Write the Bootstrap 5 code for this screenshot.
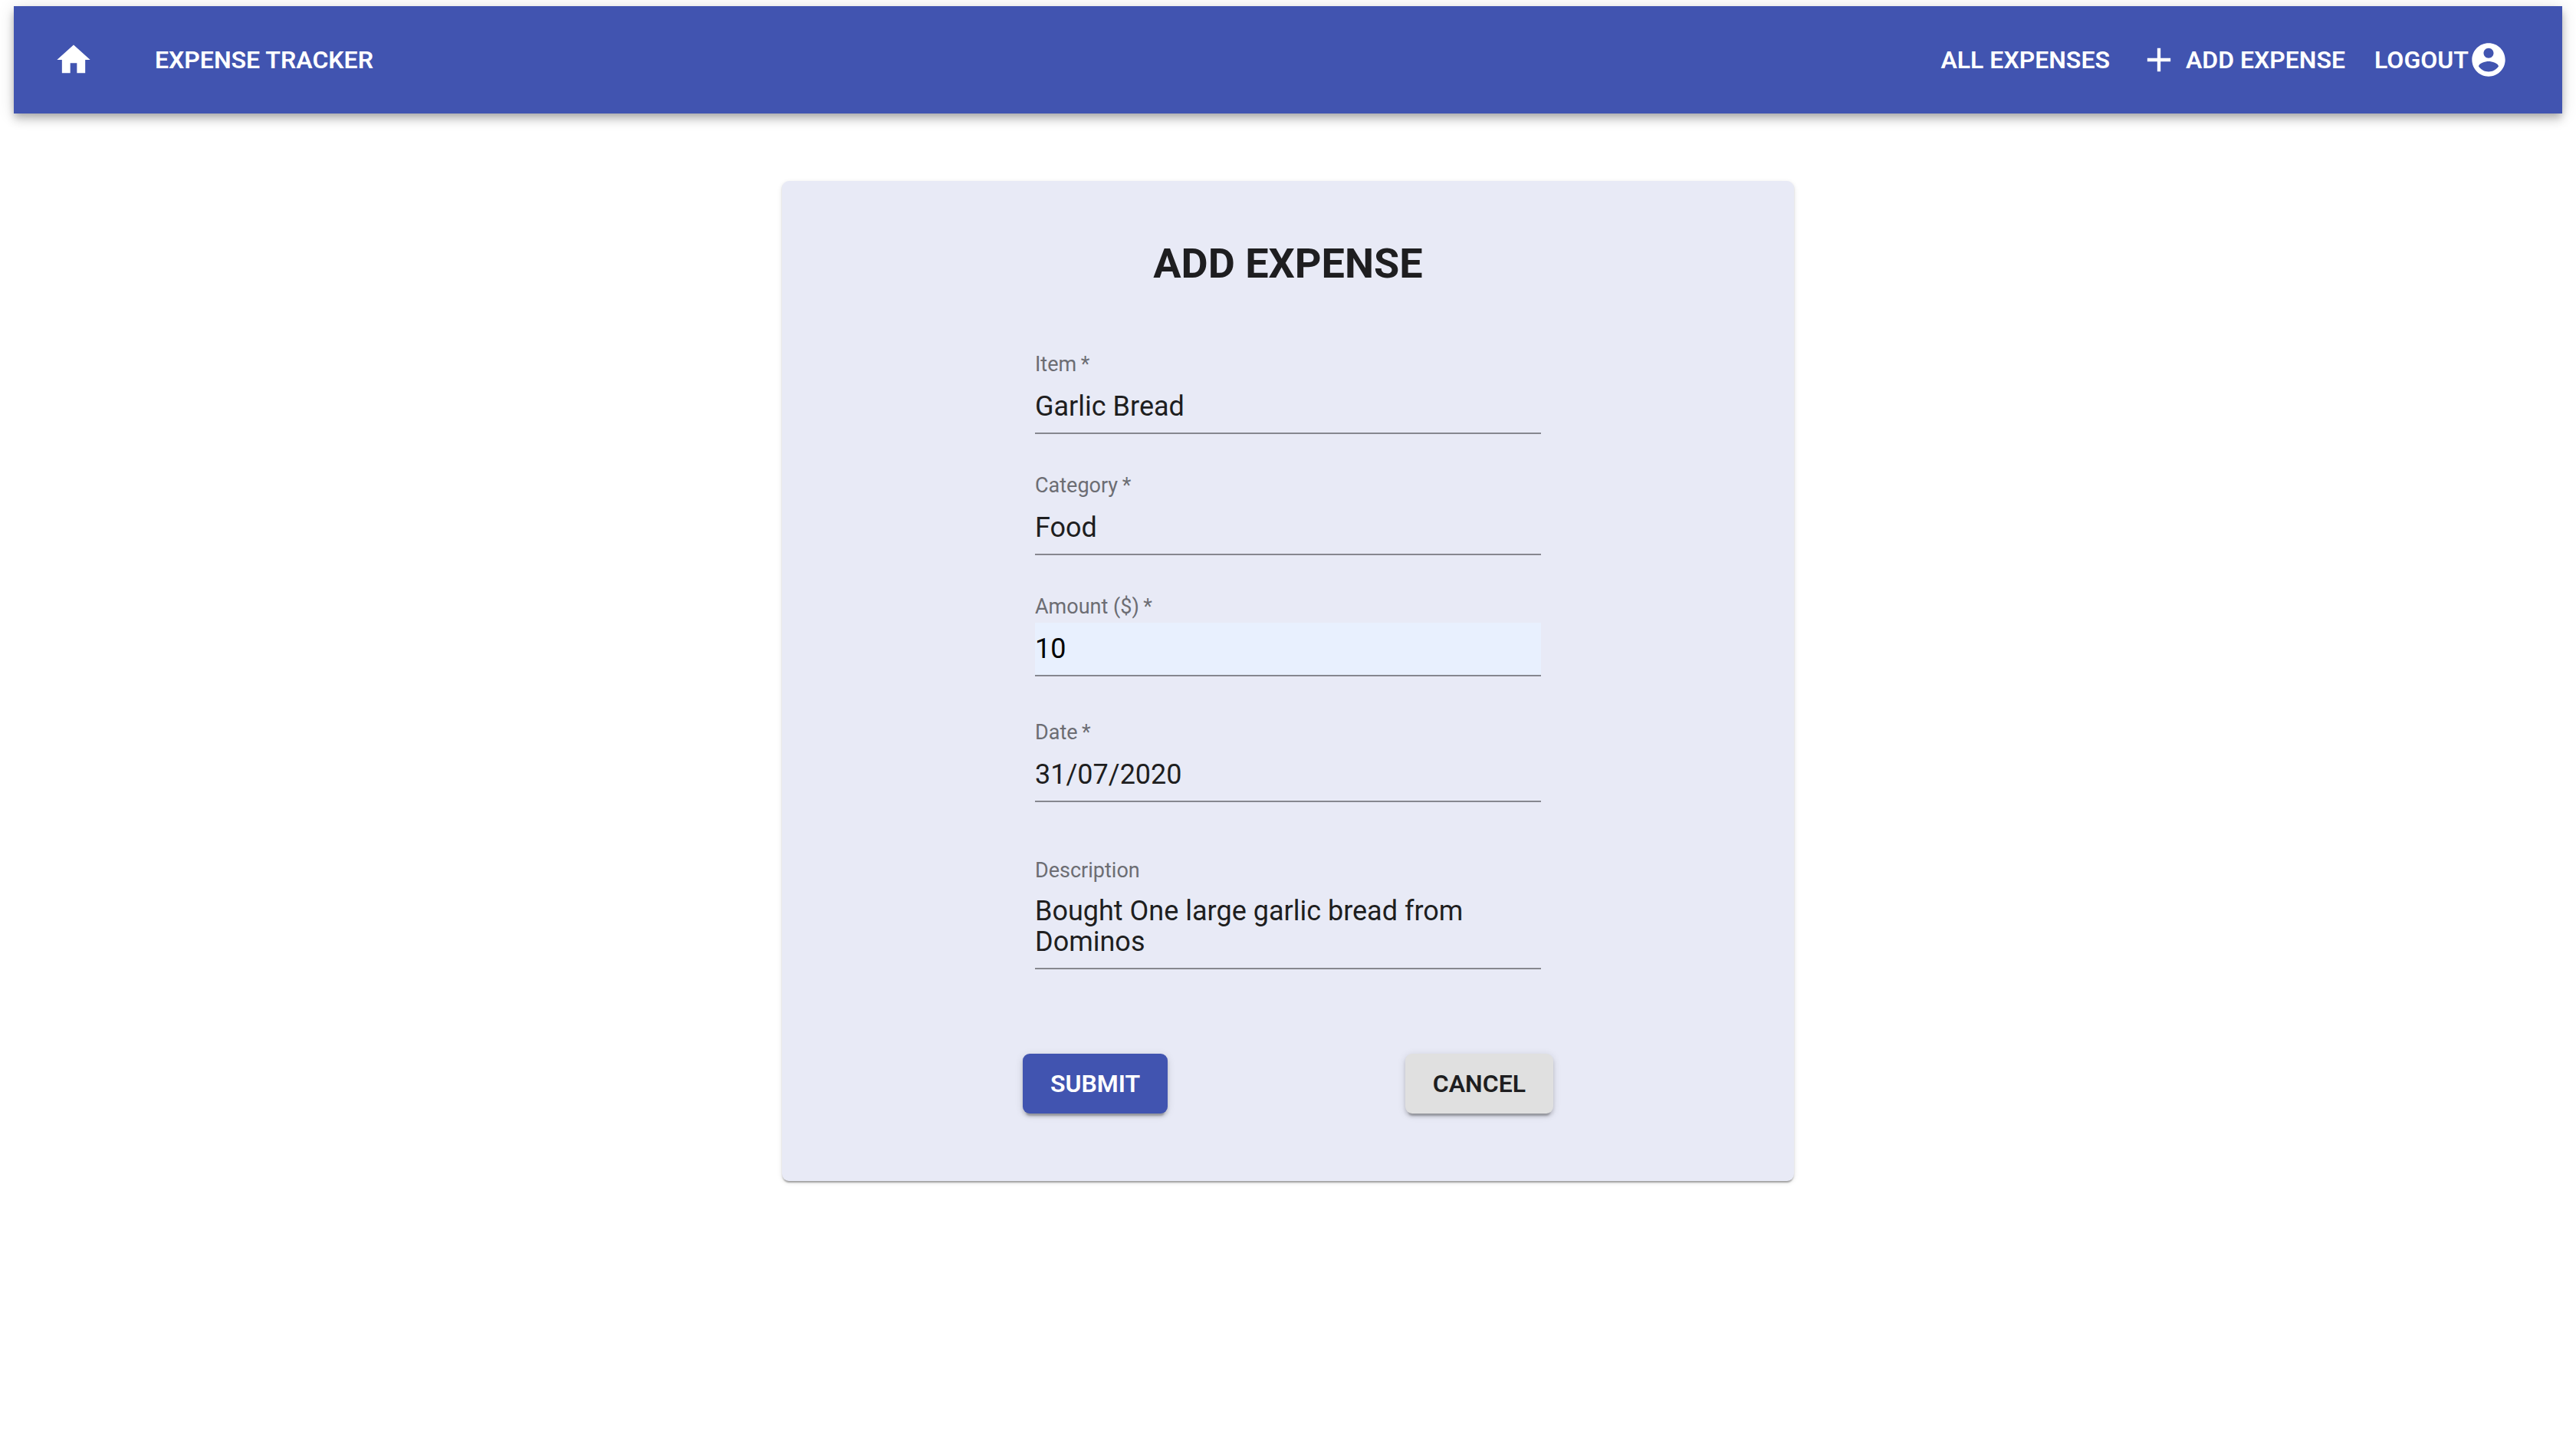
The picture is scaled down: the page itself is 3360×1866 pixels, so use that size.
<!DOCTYPE html>
<html lang="en">
<head>
<meta charset="utf-8">
<meta name="viewport" content="width=device-width, initial-scale=1">
<title>Expense Tracker</title>
<link href="https://cdn.jsdelivr.net/npm/bootstrap@5.3.0/dist/css/bootstrap.min.css" rel="stylesheet">
<style>
  :root { --indigo: #4154b0; --ink: #1e1e20; }
  body { font-family: Roboto, "Liberation Sans", sans-serif; font-size: 36px; color: var(--ink); background: #fff; padding: 8px 18px; }
  svg { width: 52px; height: 52px; fill: currentColor; flex: none; }
  .topbar { min-height: 140px; padding: 0 70px 0 52px; background: var(--indigo);
    box-shadow: 0 4px 9px -2px rgba(0,0,0,.2), 0 9px 11px 0 rgba(0,0,0,.14), 0 2px 22px 0 rgba(0,0,0,.12); }
  .topbar a { font-size: 32px; line-height: 56px; font-weight: 600; color: #fff; text-decoration: none; }
  .brand-gap { gap: 80px; }
  .menu-gap { gap: 38px; }
  .add-gap { gap: 9px; }
  .panel { max-width: 1320px; margin-top: 88px; padding: 76px 0 88px; border-radius: 9px; background: #e8eaf6;
    box-shadow: 0 4px 2px -2px rgba(0,0,0,.2), 0 2px 2px 0 rgba(0,0,0,.14), 0 2px 6px 0 rgba(0,0,0,.12); }
  .panel h1 { font-size: 54px; line-height: 64px; font-weight: 700; margin-bottom: 83px; }
  .fields { gap: 51px; }
  .fields .form-label { display: block; font-size: 27px; line-height: 32px; margin-bottom: 5px; color: #6c6d73; }
  .fields .form-control { font-size: 36px; line-height: 40px; padding: 14px 0; color: var(--ink); background: transparent;
    border: 0; border-bottom: 2px solid #86878f; border-radius: 0; resize: none; overflow: hidden; }
  .fields textarea.form-control { padding-top: 12px; }
  .fields .autofilled { background: #e8f0fe; color: #000; }
  .field-date { margin: 6px 0 22px; }
  .actions { margin: 110px -16px 0; }
  .action-btn { font-size: 32px; line-height: 38px; font-weight: 600; padding: 20px 36px; border: 0; border-radius: 9px;
    box-shadow: 0 7px 2px -4px rgba(0,0,0,.2), 0 4px 4px 0 rgba(0,0,0,.14), 0 2px 11px 0 rgba(0,0,0,.12); }
  .btn-submit, .btn-submit:hover { background: var(--indigo); color: #fff; }
  .btn-cancel, .btn-cancel:hover { background: #e0e0e0; color: var(--ink); }
</style>
</head>
<body>
<nav class="topbar d-flex align-items-center justify-content-between">
  <div class="brand-gap d-flex align-items-center">
    <a href="#" class="d-flex" aria-label="Home"><svg viewBox="0 0 24 24" aria-hidden="true"><path d="M10 20v-6h4v6h5v-8h3L12 3 2 12h3v8z"/></svg></a>
    <a href="#">EXPENSE TRACKER</a>
  </div>
  <div class="menu-gap d-flex align-items-center">
    <a href="#">ALL EXPENSES</a>
    <a href="#" class="add-gap d-flex align-items-center"><svg viewBox="0 0 24 24" aria-hidden="true"><path d="M19 13h-6v6h-2v-6H5v-2h6V5h2v6h6v2z"/></svg>ADD EXPENSE</a>
    <a href="#" class="d-flex align-items-center">LOGOUT<svg viewBox="0 0 24 24" aria-hidden="true"><path d="M12 2C6.480 2 2 6.480 2 12s4.480 10 10 10 10-4.480 10-10S17.520 2 12 2zm0 3c1.660 0 3 1.340 3 3s-1.340 3-3 3-3-1.340-3-3 1.340-3 3-3zm0 14.200c-2.500 0-4.710-1.280-6-3.220.030-1.990 4-3.080 6-3.080 1.990 0 5.970 1.090 6 3.080-1.290 1.940-3.500 3.220-6 3.220z"/></svg></a>
  </div>
</nav>
<main class="panel mx-auto">
  <h1 class="text-center">ADD EXPENSE</h1>
  <form class="w-50 mx-auto">
    <div class="fields d-flex flex-column">
      <div>
        <label class="form-label" for="item">Item&thinsp;*</label>
        <input class="form-control" id="item" type="text" value="Garlic Bread" required>
      </div>
      <div>
        <label class="form-label" for="category">Category&thinsp;*</label>
        <input class="form-control" id="category" type="text" value="Food" required>
      </div>
      <div>
        <label class="form-label" for="amount">Amount ($)&thinsp;*</label>
        <input class="form-control autofilled" id="amount" type="text" inputmode="decimal" value="10" required>
      </div>
      <div class="field-date">
        <label class="form-label" for="date">Date&thinsp;*</label>
        <input class="form-control" id="date" type="text" value="31/07/2020" required>
      </div>
      <div>
        <label class="form-label" for="description">Description</label>
        <textarea class="form-control" id="description" rows="2">Bought One large garlic bread from Dominos</textarea>
      </div>
    </div>
    <div class="actions d-flex justify-content-between">
      <button type="submit" class="btn action-btn btn-submit">SUBMIT</button>
      <button type="button" class="btn action-btn btn-cancel">CANCEL</button>
    </div>
  </form>
</main>
<script src="https://cdn.jsdelivr.net/npm/bootstrap@5.3.0/dist/js/bootstrap.bundle.min.js"></script>
</body>
</html>
